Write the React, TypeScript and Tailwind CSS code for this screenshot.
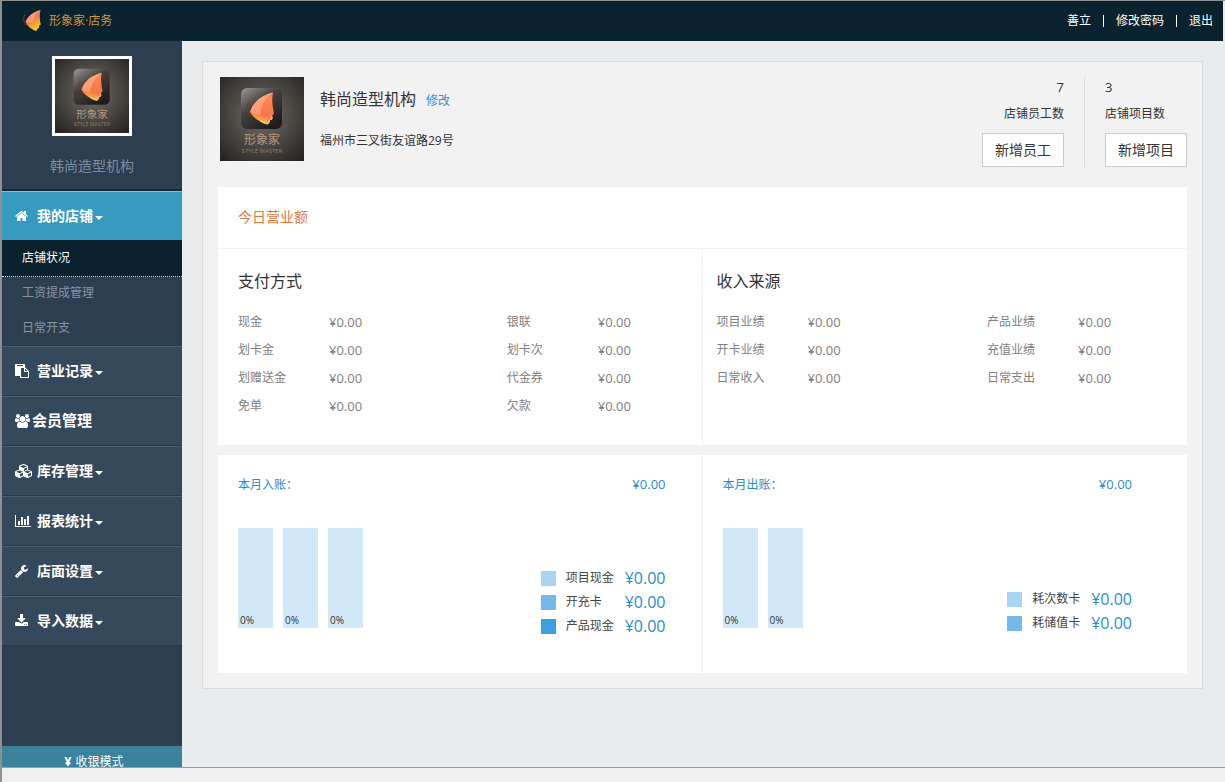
import { useState } from "react";

const icons = {
  home: {
    viewBox: "64 0 1664 1792",
    width: 13,
    d: "M1472 992v480q0 26-19 45t-45 19h-384v-384h-256v384h-384q-26 0-45-19t-19-45v-480q0-1 .5-3t.5-3l575-474 575 474q1 2 1 6zm223-69l-62 74q-8 9-21 11h-3q-13 0-21-7l-692-577-692 577q-12 8-24 7-13-2-21-11l-62-74q-8-10-7-23.5t11-21.5l719-599q32-26 76-26t76 26l244 204v-195q0-14 9-23t23-9h192q14 0 23 9t9 23v408l219 182q10 8 11 21.5t-7 23.5z",
  },
  paste: {
    viewBox: "0 0 1792 1792",
    width: 14,
    d: "M768 1664h896v-640h-416q-40 0-68-28t-28-68v-416h-384v1152zm256-1440v-64q0-13-9.5-22.5t-22.5-9.5h-704q-13 0-22.5 9.5t-9.5 22.5v64q0 13 9.5 22.5t22.5 9.5h704q13 0 22.5-9.5t9.5-22.5zm256 672h299l-299-299v299zm512 128v672q0 40-28 68t-68 28h-960q-40 0-68-28t-28-68v-160h-544q-40 0-68-28t-28-68v-1344q0-40 28-68t68-28h1088q40 0 68 28t28 68v328q21 13 36 28l408 408q28 28 48 76t20 88z",
  },
  users: {
    viewBox: "-64 0 1920 1792",
    width: 15,
    d: "M529 896q-162 5-265 128h-134q-82 0-138-40.5t-56-118.5q0-353 124-353 6 0 43.5 21t97.5 42.5 119 21.5q67 0 133-23-5 37-5 66 0 139 81 256zm1071 637q0 120-73 189.5t-194 69.5h-874q-121 0-194-69.5t-73-189.5q0-53 3.5-103.5t14-109 26.5-108.5 43-97.5 62-81 85.5-53.5 111.5-20q10 0 43 21.5t73 48 107 48 135 21.5 135-21.5 107-48 73-48 43-21.5q61 0 111.5 20t85.5 53.5 62 81 43 97.5 26.5 108.5 14 109 3.5 103.5zm-1024-1277q0 106-75 181t-181 75-181-75-75-181 75-181 181-75 181 75 75 181zm704 384q0 159-112.5 271.5t-271.5 112.5-271.5-112.5-112.5-271.5 112.5-271.5 271.5-112.5 271.5 112.5 112.5 271.5zm576 225q0 78-56 118.5t-138 40.5h-134q-103-123-265-128 81-117 81-256 0-29-5-66 66 23 133 23 59 0 119-21.5t97.5-42.5 43.5-21q124 0 124 353zm-128-609q0 106-75 181t-181 75-181-75-75-181 75-181 181-75 181 75 75 181z",
  },
  cubes: {
    viewBox: "0 0 2176 1792",
    width: 17,
    d: "M640 1632l384-192v-314l-384 164v342zm-64-454l404-173-404-173-404 173zm1088 454l384-192v-314l-384 164v342zm-64-454l404-173-404-173-404 173zm-448-293l384-165v-266l-384 164v267zm-64-379l441-189-441-189-441 189zm1088 518v416q0 36-19 67t-52 47l-448 224q-25 14-57 14t-57-14l-448-224q-4-2-7-4-2 2-7 4l-448 224q-25 14-57 14t-57-14l-448-224q-33-16-52-47t-19-67v-416q0-38 21.5-70t56.5-48l434-186v-400q0-38 21.5-70t56.5-48l448-192q23-10 50-10t50 10l448 192q35 16 56.5 48t21.5 70v400l434 186q36 16 57 48t21 70z",
  },
  chart: {
    viewBox: "0 0 2048 1792",
    width: 16,
    d: "M640 896v512h-256v-512h256zm384-512v1024h-256v-1024h256zm1024 1152v128h-2048v-1536h128v1408h1920zm-640-896v768h-256v-768h256zm384-384v1152h-256v-1152h256z",
  },
  wrench: {
    viewBox: "64 0 1664 1792",
    width: 13,
    d: "M448 1472q0-26-19-45t-45-19-45 19-19 45 19 45 45 19 45-19 19-45zm644-420l-682 682q-37 37-90 37-52 0-91-37l-106-108q-38-36-38-90 0-53 38-91l681-681q39 98 114.5 173.5t173.5 114.5zm634-435q0 39-23 106-47 134-164.5 217.5t-258.5 83.5q-185 0-316.5-131.5t-131.5-316.5 131.5-316.5 316.5-131.5q58 0 121.5 16.5t107.5 46.5q16 11 16 28t-16 28l-293 169v224l193 107q5-3 79-48.5t135.5-81 70.5-35.5q15 0 23.5 10t8.5 25z",
  },
  download: {
    viewBox: "64 0 1664 1792",
    width: 13,
    d: "M1344 1344q0-26-19-45t-45-19-45 19-19 45 19 45 45 19 45-19 19-45zm256 0q0-26-19-45t-45-19-45 19-19 45 19 45 45 19 45-19 19-45zm128-224v320q0 40-28 68t-68 28h-1472q-40 0-68-28t-28-68v-320q0-40 28-68t68-28h465l135 136q58 56 136 56t136-56l136-136h464q40 0 68 28t28 68zm-325-569q17 41-14 70l-448 448q-18 19-45 19t-45-19l-448-448q-31-29-14-70 17-39 59-39h256v-448q0-26 19-45t45-19h256q26 0 45 19t19 45v448h256q42 0 59 39z",
  },
};

type IconName = keyof typeof icons;

const menu: { icon: IconName; label: string }[] = [
  { icon: "paste", label: "营业记录" },
  { icon: "users", label: "会员管理" },
  { icon: "cubes", label: "库存管理" },
  { icon: "chart", label: "报表统计" },
  { icon: "wrench", label: "店面设置" },
  { icon: "download", label: "导入数据" },
];

const shopPages = ["店铺状况", "工资提成管理", "日常开支"];

const payments = ["现金", "银联", "划卡金", "划卡次", "划赠送金", "代金券", "免单", "欠款"];
const incomes = ["项目业绩", "产品业绩", "开卡业绩", "充值业绩", "日常收入", "日常支出"];

const swatches = ["bg-[#aad5f0]", "bg-[#74b9ea]", "bg-[#3b9fe3]"];

function Icon({ name }: { name: IconName }) {
  const icon = icons[name];
  return (
    <svg width={icon.width} height={14} viewBox={icon.viewBox} fill="currentColor" aria-hidden="true">
      <path d={icon.d} />
    </svg>
  );
}

function Caret() {
  return (
    <svg width="8" height="4" viewBox="0 0 8 4" fill="currentColor" className="mt-1 ml-0.5 shrink-0" aria-hidden="true">
      <path d="M0 0h8L4 4z" />
    </svg>
  );
}

function Logo() {
  return (
    <svg width="20" height="23" viewBox="0 0 20 23" aria-hidden="true">
      <defs>
        <linearGradient id="logo-fill" x1="0" y1="0" x2="0.5" y2="1">
          <stop offset="0" stopColor="#f3a6a0" />
          <stop offset="0.45" stopColor="#f2705a" />
          <stop offset="0.7" stopColor="#f59b2c" />
          <stop offset="1" stopColor="#f8c62c" />
        </linearGradient>
      </defs>
      <path d="M4 4C1 6 1 11 4 15" fill="none" stroke="#8a3a4c" strokeWidth="0.8" />
      <path
        d="M18.500 0C11 2 5.500 6.500 3.500 12c2 4 5.500 7.500 10.500 9 1-.3 1.500-1.200 1.600-2.400l1.600-.8-.2-2 1.800-1.400c-1.200-4.400-1.600-9.500-.3-14.400z"
        fill="url(#logo-fill)"
      />
      <path d="M18.500 0C14 3 11.500 8 10.500 13L3.500 12C5.500 6.500 11 2 18.500 0z" fill="#f9c0a8" opacity=".45" />
    </svg>
  );
}

function Avatar({ id, className }: { id: string; className: string }) {
  return (
    <svg viewBox="0 0 84 84" className={className} role="img" aria-label="形象家">
      <defs>
        <radialGradient id={`${id}-bg`} cx="0.5" cy="0.45" r="0.7">
          <stop offset="0" stopColor="#75706a" />
          <stop offset="0.5" stopColor="#4d4945" />
          <stop offset="1" stopColor="#282422" />
        </radialGradient>
        <linearGradient id={`${id}-tile`} x1="0" y1="0" x2="0.7" y2="1">
          <stop offset="0" stopColor="#9b9896" />
          <stop offset="0.45" stopColor="#45413f" />
          <stop offset="1" stopColor="#1f1b1a" />
        </linearGradient>
        <linearGradient id={`${id}-wing`} x1="0.7" y1="0" x2="0.5" y2="1">
          <stop offset="0" stopColor="#fb8a55" />
          <stop offset="0.7" stopColor="#fb7648" />
          <stop offset="1" stopColor="#ffc455" />
        </linearGradient>
      </defs>
      <rect width="84" height="84" fill={`url(#${id}-bg)`} />
      <rect x="21" y="11" width="41" height="41" rx="6" fill={`url(#${id}-tile)`} />
      <path d="M28.500 25c-2.500 5-2 10 3 14" fill="none" stroke="#7c342a" strokeWidth="1" />
      <path
        d="M53 15.500C42 18 33 25 30 35c3.500 6 10 10.500 17.500 12 1.500-.6 2-2 2-4l2.600-1-.2-3 2.100-2.500C52.500 29 51.500 22 53 15.500z"
        fill={`url(#${id}-wing)`}
      />
      <path d="M53 15.500C45 21 41 29 40 38l-10-3c3-10 12-17 23-19.500z" fill="#ffc2a0" opacity=".5" />
      <path d="M40 44c2.500 1.500 5 2.600 7.500 3 1.500-.6 2-2 2-4l2.600-1-.2-3" fill="none" stroke="#ffdf6b" strokeWidth="1" />
      <text x="42" y="67" textAnchor="middle" fontSize="12" fill="#b3987e">
        形象家
      </text>
      <text x="42" y="76" textAnchor="middle" fontSize="6" fill="#8d7c6c">
        STYLE MASTER
      </text>
    </svg>
  );
}

function AmountList({ labels }: { labels: string[] }) {
  return (
    <dl className="mt-[15px] grid grid-cols-[58%_1fr] text-xs leading-7 text-[#808080]">
      {labels.map((label) => (
        <div key={label} className="flex">
          <dt className="w-[91px]">{label}</dt>
          <dd className="text-[13px]">¥0.00</dd>
        </div>
      ))}
    </dl>
  );
}

function MonthPanel({ title, legend, className, legendClass }: { title: string; legend: string[]; className: string; legendClass: string }) {
  return (
    <section className={`pt-[19px] pb-[35px] pl-5 text-[#2a8ccb] ${className}`}>
      <div className="flex items-baseline justify-between">
        <h3 className="text-xs leading-5">{title}</h3>
        <span className="text-[13px] leading-5">¥0.00</span>
      </div>
      <div className="mt-[33px] flex items-start justify-between">
        <div className="flex gap-2.5">
          {legend.map((item) => (
            <div key={item} className="flex h-[100px] w-[35px] items-end bg-[#d0e8f7] pl-0.5 text-[10px] leading-4 text-[#333]">
              0%
            </div>
          ))}
        </div>
        <ul className={legendClass}>
          {legend.map((item, i) => (
            <li key={item} className="flex h-6 items-center">
              <span className={`mr-2.5 size-[15px] ${swatches[i]}`} />
              <span className="w-[59px] text-xs text-[#444]">{item}</span>
              <span className="text-base leading-6">¥0.00</span>
            </li>
          ))}
        </ul>
      </div>
    </section>
  );
}

export default function App() {
  const [page, setPage] = useState("店铺状况");

  return (
    <div className="flex h-screen flex-col border-t border-l-2 border-[#8f9090] bg-[#eaebed] font-['Open_Sans','Noto_Sans_CJK_SC',sans-serif] text-xs text-[#333]">
      <header className="mr-0.5 flex h-10 shrink-0 items-center bg-[#0a222e] pr-2.5 pl-5">
        <Logo />
        <h1 className="ml-[7px] text-xs text-[#cf9434]">形象家·店务</h1>
        <nav className="ml-auto flex items-center gap-3 text-white">
          <a href="#user">善立</a>
          <span className="h-3 w-px bg-white" />
          <a href="#password">修改密码</a>
          <span className="h-3 w-px bg-white" />
          <a href="#logout">退出</a>
        </nav>
      </header>

      <div className="flex min-h-0 flex-1">
        <aside className="flex w-[180px] shrink-0 flex-col overflow-hidden bg-[#2c3e50]">
          <div className="flex h-[150px] shrink-0 flex-col items-center border-b-2 border-[#152838] pt-[15px]">
            <Avatar id="side" className="size-20 border-3 border-white" />
            <p className="mt-5 text-sm leading-5 text-[#7e8d9d]">韩尚造型机构</p>
          </div>

          <nav className="text-white">
            <button className="flex h-[49px] w-full items-center border-t border-[#72c4e4] bg-[#379bbf] pl-[13px] text-sm font-bold">
              <span className="w-[22px]">
                <Icon name="home" />
              </span>
              我的店铺
              <Caret />
            </button>
            <ul className="h-[106px]">
              {shopPages.map((item) => (
                <li key={item}>
                  <button
                    onClick={() => setPage(item)}
                    className={
                      item === page
                        ? "block h-[37px] w-full border-b border-dotted border-[#cfd6da] bg-[#0a222e] pl-5 text-left text-white"
                        : "block h-[35px] w-full pb-1 pl-5 text-left text-[#8795a3]"
                    }
                  >
                    {item}
                  </button>
                </li>
              ))}
            </ul>
            {menu.map(({ icon, label }) => (
              <button
                key={label}
                className="flex h-[50px] w-full items-center border-t border-b border-t-[#496073] border-b-[#283b4b] bg-[#34495b] pl-[13px] text-sm font-bold"
              >
                {icon === "users" ? (
                  <>
                    <span className="w-[17px]">
                      <Icon name={icon} />
                    </span>
                    <span className="text-[15px]">{label}</span>
                  </>
                ) : (
                  <>
                    <span className="w-[22px]">
                      <Icon name={icon} />
                    </span>
                    {label}
                    <Caret />
                  </>
                )}
              </button>
            ))}
          </nav>

          <button className="mt-auto flex h-[21px] shrink-0 items-start justify-center gap-1 bg-[#3b829b] pt-2.5 pl-1 leading-3 text-white">
            <b>¥</b>收银模式
          </button>
        </aside>

        <main className="min-w-0 flex-1 overflow-hidden pt-5 pr-[22px] pl-5">
          <div className="border border-[#dadbdc] bg-[#f2f2f2] p-[15px]">
            <div className="flex pb-5 pl-0.5">
              <Avatar id="shop" className="size-[84px] shrink-0" />
              <div className="ml-4 pt-2.5">
                <h2 className="text-base leading-6">
                  韩尚造型机构
                  <a href="#edit" className="ml-2.5 text-xs text-[#428bca]">
                    修改
                  </a>
                </h2>
                <p className="mt-5 leading-5">福州市三叉街友谊路29号</p>
              </div>
              <div className="ml-auto border-r border-[#d8dadc] pr-5 text-right">
                <p className="text-[13px] leading-5">7</p>
                <p className="mt-[7px] leading-5">店铺员工数</p>
                <button className="mt-[9px] h-[34px] w-[82px] border border-[#ccc] bg-white text-sm">新增员工</button>
              </div>
              <div className="pl-5">
                <p className="text-[13px] leading-5">3</p>
                <p className="mt-[7px] leading-5">店铺项目数</p>
                <button className="mt-[9px] h-[34px] w-[82px] border border-[#ccc] bg-white text-sm">新增项目</button>
              </div>
            </div>

            <div className="bg-white">
              <h2 className="border-b border-[#f2f2f2] px-5 pt-5 pb-[21px] text-sm leading-5 text-[#dd7a42]">今日营业额</h2>
              <div className="grid grid-cols-2">
                <section className="border-r border-[#f2f2f2] pt-5 pb-[25px] pl-5">
                  <h3 className="text-base leading-6">支付方式</h3>
                  <AmountList labels={payments} />
                </section>
                <section className="pt-5 pr-1 pb-[25px] pl-3.5">
                  <h3 className="text-base leading-6">收入来源</h3>
                  <AmountList labels={incomes} />
                </section>
              </div>
            </div>

            <div className="mt-2.5 grid grid-cols-2 bg-white">
              <MonthPanel
                title="本月入账："
                legend={["项目现金", "开充卡", "产品现金"]}
                className="border-r border-[#f2f2f2] pr-9"
                legendClass="pt-[38px]"
              />
              <MonthPanel title="本月出账：" legend={["耗次数卡", "耗储值卡"]} className="pr-[55px]" legendClass="pt-[59px]" />
            </div>
          </div>
        </main>
      </div>

      <footer className="h-[15px] shrink-0 border-t border-[#9b9c9f] bg-[#f0f0f0]" />
    </div>
  );
}
